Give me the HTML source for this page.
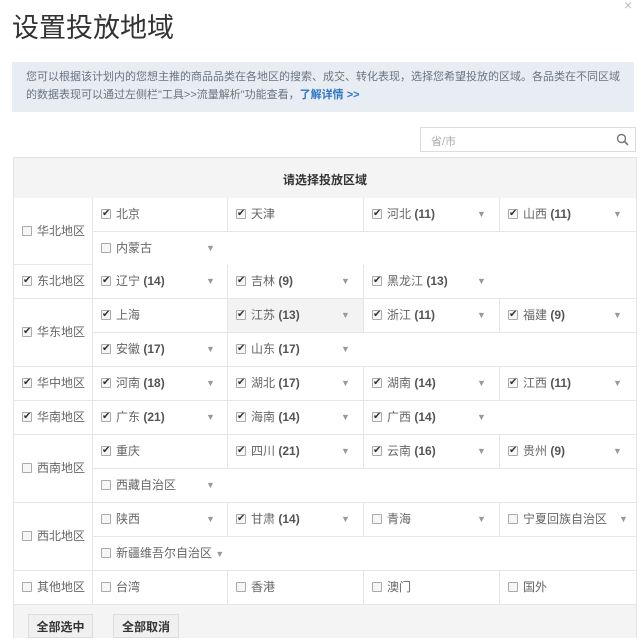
<!DOCTYPE html>
<html><head><meta charset="utf-8"><style>
*{margin:0;padding:0;box-sizing:border-box}
body{width:643px;height:638px;overflow:hidden;background:#fff;font-family:"Liberation Sans","Noto Sans CJK SC",sans-serif;color:#555;position:relative}
.t{position:absolute;left:12px;top:6px;font-size:27px;color:#333}
.x{position:absolute;left:624px;top:-3px;font-size:14px;color:#bbb}
.info{position:absolute;left:12px;top:62px;width:622px;height:50px;background:#e7edf3;font-size:11px;line-height:18px;padding:6px 10px 0 14px;color:#6a7480}
.info a{color:#2d77c7;font-weight:bold}
.s{position:absolute;left:420px;top:127px;width:216px;height:25px;border:1px solid #ddd;font-size:11px;color:#aaa;padding:5px 10px}
.s svg{position:absolute;right:6px;top:5px}
.tb{position:absolute;left:13px;top:157px;width:624px;height:481px;background:#f4f4f4;border:1px solid #e3e3e3;border-bottom:none}
.h{position:absolute;left:13px;top:157px;width:624px;height:41px;text-align:center;line-height:46px;font-size:12px;font-weight:bold;color:#333}
.c{position:absolute;height:34px;width:136px;background:#fff;border-right:1px solid #e6e6e6;border-bottom:1px solid #e6e6e6;font-size:12px;line-height:33px;padding-left:8px;white-space:nowrap;color:#666}
.r{left:13px;width:80px;border-left:1px solid #e3e3e3;padding-left:8px}
.c b{font-weight:bold;color:#555}
.k{display:inline-block;width:10px;height:10px;border:1px solid #aaa;background:#f6f6f6;vertical-align:-1px;margin-right:5px;position:relative;border-radius:1px}
.k.y::after{content:"✔";position:absolute;left:0;top:-1px;line-height:10px;font-size:10px;color:#333}
.a{position:absolute;left:113px;top:0;color:#999;font-size:9px}
.btn{position:absolute;top:614px;height:24px;border:1px solid #ddd;background:#f0f0f0;font-size:12px;font-weight:bold;color:#333;text-align:center;line-height:24px}
</style></head><body>
<div class="t">设置投放地域</div><div class="x">×</div>
<div class="info">您可以根据该计划内的您想主推的商品品类在各地区的搜索、成交、转化表现，选择您希望投放的区域。各品类在不同区域的数据表现可以通过左侧栏"工具>>流量解析"功能查看，<a>了解详情 &gt;&gt;</a></div>
<div class="s">省/市<svg width="13" height="13" viewBox="0 0 13 13"><circle cx="5.5" cy="5.5" r="4" fill="none" stroke="#777" stroke-width="1.4"/><path d="M8.5 8.5L12 12" stroke="#777" stroke-width="1.6"/></svg></div>
<div class="tb"></div>
<div class="h">请选择投放区域</div>

<div class="c r" style="top:198px;height:67px;line-height:66px"><span class="k"></span>华北地区</div>
<div class="c r" style="top:265px"><span class="k y"></span>东北地区</div>
<div class="c r" style="top:299px;height:68px;line-height:67px"><span class="k y"></span>华东地区</div>
<div class="c r" style="top:367px"><span class="k y"></span>华中地区</div>
<div class="c r" style="top:401px"><span class="k y"></span>华南地区</div>
<div class="c r" style="top:435px;height:68px;line-height:67px"><span class="k"></span>西南地区</div>
<div class="c r" style="top:503px;height:68px;line-height:67px"><span class="k"></span>西北地区</div>
<div class="c r" style="top:571px"><span class="k"></span>其他地区</div>

<div class="c" style="left:93px;top:198px;width:135px"><span class="k y"></span>北京</div>
<div class="c" style="left:228px;top:198px"><span class="k y"></span>天津</div>
<div class="c" style="left:364px;top:198px"><span class="k y"></span>河北 <b>(11)</b><span class="a">▼</span></div>
<div class="c" style="left:500px;top:198px;width:137px"><span class="k y"></span>山西 <b>(11)</b><span class="a">▼</span></div>
<div class="c" style="left:93px;top:232px;width:544px"><span class="k"></span>内蒙古<span class="a">▼</span></div>
<div class="c" style="left:93px;top:265px;width:135px"><span class="k y"></span>辽宁 <b>(14)</b><span class="a">▼</span></div>
<div class="c" style="left:228px;top:265px"><span class="k y"></span>吉林 <b>(9)</b><span class="a">▼</span></div>
<div class="c" style="left:364px;top:265px;width:273px"><span class="k y"></span>黑龙江 <b>(13)</b><span class="a">▼</span></div>
<div class="c" style="left:93px;top:299px;width:135px"><span class="k y"></span>上海</div>
<div class="c" style="left:228px;top:299px;background:#f3f3f3"><span class="k y"></span>江苏 <b>(13)</b><span class="a">▼</span></div>
<div class="c" style="left:364px;top:299px"><span class="k y"></span>浙江 <b>(11)</b><span class="a">▼</span></div>
<div class="c" style="left:500px;top:299px;width:137px"><span class="k y"></span>福建 <b>(9)</b><span class="a">▼</span></div>
<div class="c" style="left:93px;top:333px;width:135px"><span class="k y"></span>安徽 <b>(17)</b><span class="a">▼</span></div>
<div class="c" style="left:228px;top:333px;width:409px"><span class="k y"></span>山东 <b>(17)</b><span class="a">▼</span></div>
<div class="c" style="left:93px;top:367px;width:135px"><span class="k y"></span>河南 <b>(18)</b><span class="a">▼</span></div>
<div class="c" style="left:228px;top:367px"><span class="k y"></span>湖北 <b>(17)</b><span class="a">▼</span></div>
<div class="c" style="left:364px;top:367px"><span class="k y"></span>湖南 <b>(14)</b><span class="a">▼</span></div>
<div class="c" style="left:500px;top:367px;width:137px"><span class="k y"></span>江西 <b>(11)</b><span class="a">▼</span></div>
<div class="c" style="left:93px;top:401px;width:135px"><span class="k y"></span>广东 <b>(21)</b><span class="a">▼</span></div>
<div class="c" style="left:228px;top:401px"><span class="k y"></span>海南 <b>(14)</b><span class="a">▼</span></div>
<div class="c" style="left:364px;top:401px;width:273px"><span class="k y"></span>广西 <b>(14)</b><span class="a">▼</span></div>
<div class="c" style="left:93px;top:435px;width:135px"><span class="k y"></span>重庆</div>
<div class="c" style="left:228px;top:435px"><span class="k y"></span>四川 <b>(21)</b><span class="a">▼</span></div>
<div class="c" style="left:364px;top:435px"><span class="k y"></span>云南 <b>(16)</b><span class="a">▼</span></div>
<div class="c" style="left:500px;top:435px;width:137px"><span class="k y"></span>贵州 <b>(9)</b><span class="a">▼</span></div>
<div class="c" style="left:93px;top:469px;width:544px"><span class="k"></span>西藏自治区<span class="a">▼</span></div>
<div class="c" style="left:93px;top:503px;width:135px"><span class="k"></span>陕西<span class="a">▼</span></div>
<div class="c" style="left:228px;top:503px"><span class="k y"></span>甘肃 <b>(14)</b><span class="a">▼</span></div>
<div class="c" style="left:364px;top:503px"><span class="k"></span>青海<span class="a">▼</span></div>
<div class="c" style="left:500px;top:503px;width:137px"><span class="k"></span>宁夏回族自治区<span class="a" style="left:119px">▼</span></div>
<div class="c" style="left:93px;top:537px;width:544px"><span class="k"></span>新疆维吾尔自治区 <span style="color:#999;font-size:9px">▼</span></div>
<div class="c" style="left:93px;top:571px;width:135px"><span class="k"></span>台湾</div>
<div class="c" style="left:228px;top:571px"><span class="k"></span>香港</div>
<div class="c" style="left:364px;top:571px"><span class="k"></span>澳门</div>
<div class="c" style="left:500px;top:571px;width:137px"><span class="k"></span>国外</div>

<div class="btn" style="left:28px;width:65px">全部选中</div>
<div class="btn" style="left:113px;width:66px">全部取消</div>
</body></html>
